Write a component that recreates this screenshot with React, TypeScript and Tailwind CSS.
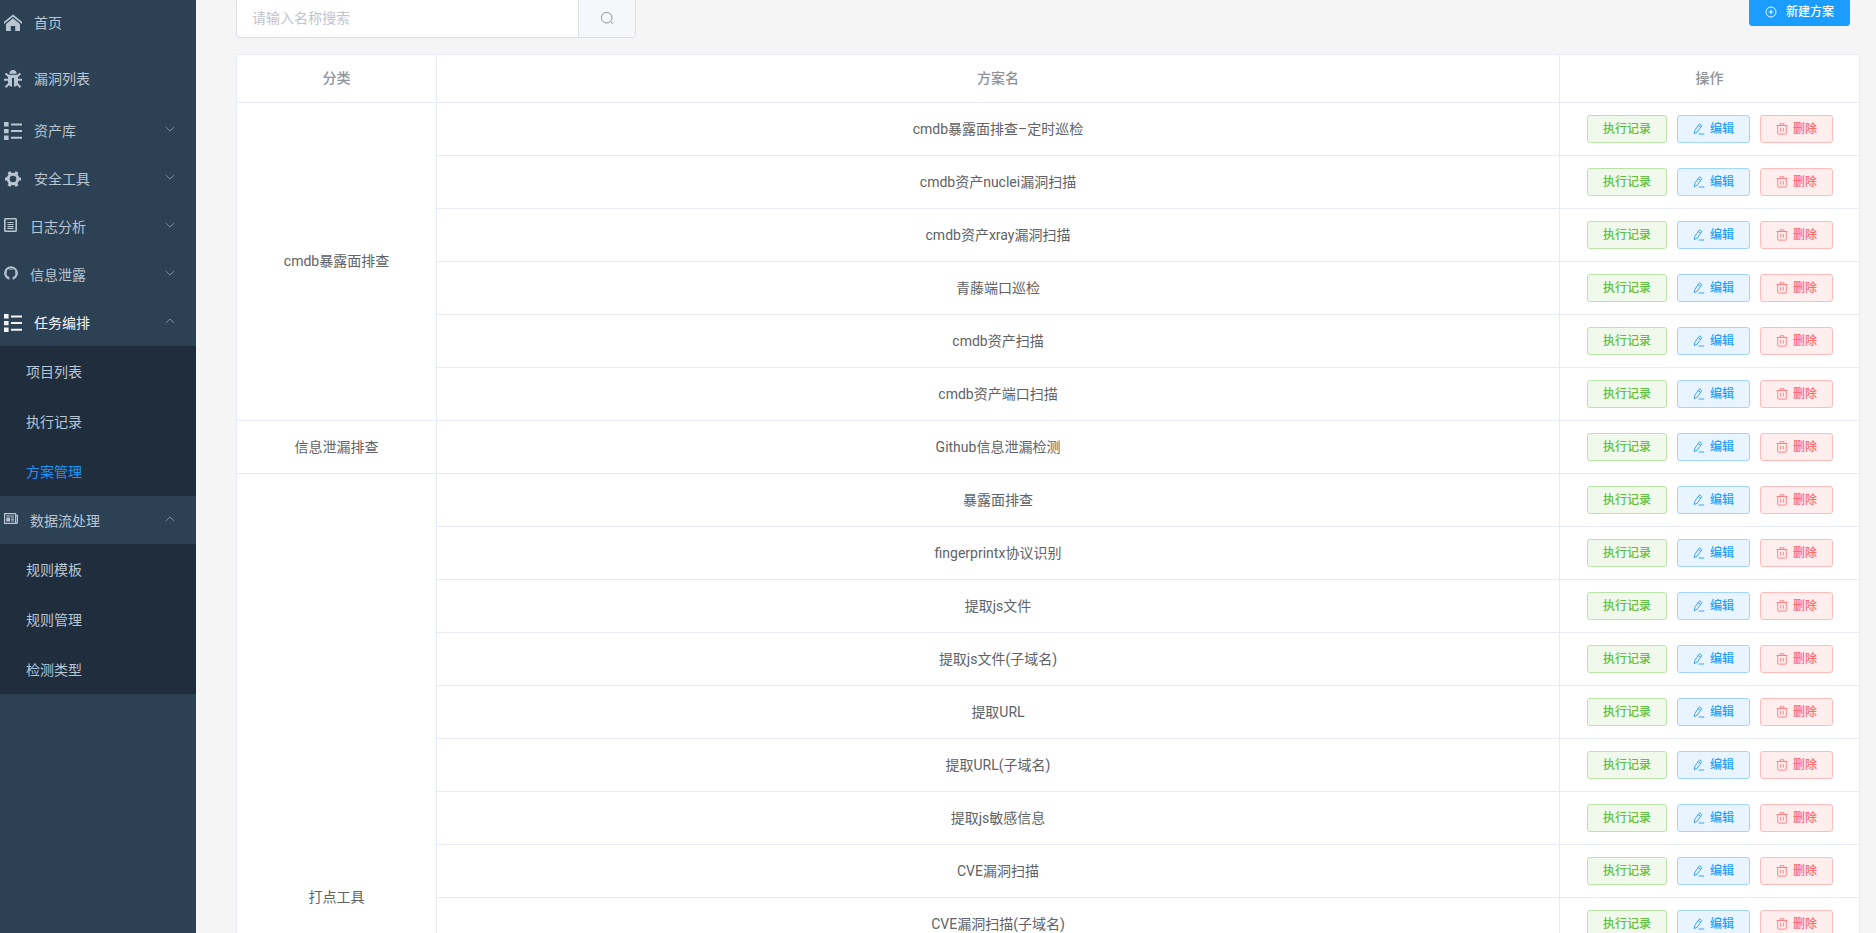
import { useState } from "react";
import type { ReactNode } from "react";
import clsx from "clsx";

type IconProps = { className?: string };

const HomeIcon = ({ className }: IconProps) => (
  <svg viewBox="0 0 18 18" className={className} fill="currentColor" aria-hidden="true">
    <path d="M9 0.6 0 7.8v2.1l9-7.1 9 7.1V7.8z" />
    <path d="M9 4.3 2 9.9V17h4.8v-4.9h4.4V17H16V9.9z" />
  </svg>
);

const BugIcon = ({ className }: IconProps) => (
  <svg viewBox="0 0 18 18" className={className} aria-hidden="true">
    <path d="M5.4 3.7a3.6 3.6 0 0 1 7.2 0z" fill="currentColor" />
    <path
      d="M4 4.7h10v7.6c0 2.6-1.7 4.2-4 4.6V8H8v8.9c-2.3-.4-4-2-4-4.6z"
      fill="currentColor"
    />
    <path
      d="M1.6 3.4 5 6.6M16.4 3.4 13 6.6M0 9.8h4.6M18 9.8h-4.6M1.6 17.2 5 13.6M16.4 17.2 13 13.6"
      stroke="currentColor"
      strokeWidth="2"
    />
  </svg>
);

const ListIcon = ({ className }: IconProps) => (
  <svg viewBox="0 0 18 18" className={className} fill="currentColor" aria-hidden="true">
    <path d="M0 0h4.6v4.4H0zM0 6.9h4.6v4.3H0zM0 13.6h4.6V18H0zM7 1.4h11v2H7zM7 8h11v2H7zM7 14.8h11v2H7z" />
  </svg>
);

const GearIcon = ({ className }: IconProps) => (
  <svg viewBox="0 0 18 18" className={className} aria-hidden="true">
    <circle cx="9" cy="9" r="4.8" fill="none" stroke="currentColor" strokeWidth="3" />
    <path
      d="M6.4 4.5 4.9 1.9M11.6 4.5l1.5-2.6M3.8 9H1M14.2 9H17M6.4 13.5l-1.5 2.6M11.6 13.5l1.5 2.6"
      stroke="currentColor"
      strokeWidth="3.2"
    />
  </svg>
);

const LogIcon = ({ className }: IconProps) => (
  <svg viewBox="0 0 14 14" className={className} fill="none" stroke="currentColor" aria-hidden="true">
    <rect x="0.8" y="0.8" width="11.4" height="12.4" rx="0.8" strokeWidth="1.6" />
    <path d="M3.4 4.5h6.2M3.4 6.5h6.2M3.4 8.5h6.2M3.4 10.4h6.2" strokeWidth="1.1" />
  </svg>
);

const GithubIcon = ({ className }: IconProps) => (
  <svg viewBox="0 0 14 14" className={className} fill="none" stroke="currentColor" aria-hidden="true">
    <path d="M4.9 12.7a6 6 0 1 1 4.2 0" strokeWidth="1.7" />
    <path
      d="M4.9 13.4v-2.2C2.9 10.7 2.2 9.4 2.2 7.5c0-2.8.8-4.3 1.4-5.2l2 .9c1-.2 1.8-.2 2.8 0l2-.9c.6.9 1.4 2.4 1.4 5.2 0 1.900-.7 3.200-2.700 3.700v2.200"
      strokeWidth="1"
    />
    <path d="M2.6 10c.7.3.8 1.6 2.3 1.5" strokeWidth="0.9" />
  </svg>
);

const NewsIcon = ({ className }: IconProps) => (
  <svg viewBox="0 0 14 14" className={className} aria-hidden="true">
    <path d="M.6 1.6h11v9.8H.6zM11.6 3.4h1.8v7.4l-.7.6h-1.1" fill="none" stroke="currentColor" strokeWidth="1.2" />
    <path d="M2.3 3.4h7.6v1H2.3zM2.3 5.4h3.8v4.2H2.3zM7 5.4h3v1H7zM7 7h3v.8H7zM7 8.6h3v.8H7z" fill="currentColor" />
  </svg>
);

const ChevronIcon = ({ className }: IconProps) => (
  <svg viewBox="0 0 12 12" className={className} fill="none" stroke="currentColor" aria-hidden="true">
    <path d="M1.8 4 6 8l4.2-4" />
  </svg>
);

const SearchIcon = ({ className }: IconProps) => (
  <svg viewBox="0 0 14 14" className={className} fill="none" stroke="currentColor" aria-hidden="true">
    <circle cx="6.7" cy="6.7" r="5.3" />
    <path d="m10.5 10.5 2.3 2.3" />
  </svg>
);

const PlusIcon = ({ className }: IconProps) => (
  <svg viewBox="0 0 12 12" className={className} fill="none" stroke="currentColor" aria-hidden="true">
    <circle cx="6" cy="6" r="5" strokeWidth="0.9" />
    <path d="M6 3.7v4.6M3.7 6h4.6" strokeWidth="0.9" />
  </svg>
);

const EditIcon = ({ className }: IconProps) => (
  <svg viewBox="0 0 12 12" className={className} fill="none" stroke="currentColor" aria-hidden="true">
    <path
      d="M1.3 10.6 1.7 7.6 6 1.3a.7.7 0 0 1 1-.2l1.3.9a.7.7 0 0 1 .2 1L4.2 9.2zM5.2 2.6l2.3 1.6M5.6 11h5.6"
      strokeWidth="0.9"
      strokeLinejoin="round"
    />
  </svg>
);

const TrashIcon = ({ className }: IconProps) => (
  <svg viewBox="0 0 12 12" className={className} fill="none" stroke="currentColor" aria-hidden="true">
    <path
      d="M.6 2.5h10.800M4 2.500V.8h4v1.700M1.700 2.500v7.800c0 .5.300.8.800.8h7c.5 0 .8-.3.800-.8V2.500M4.700 4.800v3.800M7.300 4.800v3.800"
      strokeWidth="0.8"
    />
  </svg>
);

type MenuEntry = {
  label: string;
  icon: (props: IconProps) => ReactNode;
  small?: boolean; // font icons are smaller than the svg ones
  link?: boolean;
  active?: boolean;
  children?: string[];
};

const MENU: MenuEntry[] = [
  { label: "首页", icon: HomeIcon, link: true },
  { label: "漏洞列表", icon: BugIcon, link: true },
  { label: "资产库", icon: ListIcon },
  { label: "安全工具", icon: GearIcon },
  { label: "日志分析", icon: LogIcon, small: true },
  { label: "信息泄露", icon: GithubIcon, small: true },
  { label: "任务编排", icon: ListIcon, active: true, children: ["项目列表", "执行记录", "方案管理"] },
  { label: "数据流处理", icon: NewsIcon, small: true, children: ["规则模板", "规则管理", "检测类型"] },
];

const GROUPS = [
  {
    category: "cmdb暴露面排查",
    total: 6,
    plans: [
      "cmdb暴露面排查–定时巡检",
      "cmdb资产nuclei漏洞扫描",
      "cmdb资产xray漏洞扫描",
      "青藤端口巡检",
      "cmdb资产扫描",
      "cmdb资产端口扫描",
    ],
  },
  { category: "信息泄漏排查", total: 1, plans: ["Github信息泄漏检测"] },
  {
    category: "打点工具",
    total: 16,
    plans: [
      "暴露面排查",
      "fingerprintx协议识别",
      "提取js文件",
      "提取js文件(子域名)",
      "提取URL",
      "提取URL(子域名)",
      "提取js敏感信息",
      "CVE漏洞扫描",
      "CVE漏洞扫描(子域名)",
    ],
  },
];

const Sidebar = () => {
  const [open, setOpen] = useState(["任务编排", "数据流处理"]);
  const [current, setCurrent] = useState("方案管理");

  const toggle = (label: string) =>
    setOpen((prev) => (prev.includes(label) ? prev.filter((l) => l !== label) : [...prev, label]));

  return (
    <aside className="w-49 shrink-0 overflow-hidden bg-[#2d4155] text-[#b8c5d3]">
      <nav className="-mt-1.5">
        {MENU.map(({ label, icon: Icon, small, link, active, children }) => {
          const isOpen = open.includes(label);
          const content = (
            <>
              <Icon className={small ? "mb-1 size-3.5" : "size-4.5"} />
              <span>{label}</span>
            </>
          );

          if (link) {
            return (
              <a key={label} href="#" className="flex h-14 items-center gap-3 px-1 pt-0.5">
                {content}
              </a>
            );
          }

          return (
            <div key={label}>
              <button
                type="button"
                onClick={() => toggle(label)}
                aria-expanded={isOpen}
                className={clsx(
                  "flex h-12 w-full items-center gap-3 pt-0.5 pr-5 pl-1",
                  active && "text-[#f4f4f5]",
                )}
              >
                {content}
                <ChevronIcon
                  className={clsx("mb-1 ml-auto size-3 text-[#84909d]", isOpen && "rotate-180")}
                />
              </button>
              {isOpen && children && (
                <div className="bg-[#1f2d3d]">
                  {children.map((child) => (
                    <a
                      key={child}
                      href="#"
                      onClick={() => setCurrent(child)}
                      className={clsx(
                        "flex h-12.5 items-center pt-0.5 pl-6.5",
                        child === current && "text-[#1c98f8]",
                      )}
                    >
                      {child}
                    </a>
                  ))}
                </div>
              )}
            </div>
          );
        })}
      </nav>
    </aside>
  );
};

const miniButton =
  "flex h-7 items-center rounded-[3px] border px-[15px] text-xs font-medium whitespace-nowrap";

const RowActions = () => (
  <div className="flex justify-center gap-2.5 pl-px">
    <button type="button" className={`${miniButton} border-[#b9e5a6] bg-[#f0f9eb] text-[#5fc044]`}>
      执行记录
    </button>
    <button type="button" className={`${miniButton} gap-[5px] border-[#a3d3ff] bg-[#e8f4ff] text-[#259dff]`}>
      <EditIcon className="size-3" />
      编辑
    </button>
    <button type="button" className={`${miniButton} gap-[5px] border-[#ffbcbc] bg-[#ffeeee] text-[#ff6a6e]`}>
      <TrashIcon className="size-3" />
      删除
    </button>
  </div>
);

const cell = "border border-[#e6ebf5] text-center";

const PlanTable = () => (
  <table className="mt-4 w-full table-fixed border-collapse bg-white text-[#606266]">
    <thead>
      <tr className="h-12 text-[#909399]">
        <th className={`${cell} w-50 pb-0.5 font-medium`}>分类</th>
        <th className={`${cell} pb-0.5 font-medium`}>方案名</th>
        <th className={`${cell} w-75 pb-0.5 font-medium`}>操作</th>
      </tr>
    </thead>
    <tbody>
      {GROUPS.map(({ category, total, plans }) =>
        Array.from({ length: total }, (_, i) => (
          <tr key={`${category}-${i}`} className="h-[53px]">
            {i === 0 && (
              <td rowSpan={total} className={`${cell} pb-px`}>
                {category}
              </td>
            )}
            <td className={cell}>{plans[i]}</td>
            <td className={cell}>{plans[i] && <RowActions />}</td>
          </tr>
        )),
      )}
    </tbody>
  </table>
);

const App = () => {
  const [keyword, setKeyword] = useState("");

  return (
    <div className="flex h-screen overflow-hidden bg-[#f5f5f5] font-[Roboto,'Noto_Sans_CJK_SC',sans-serif] text-sm">
      <Sidebar />
      <main className="min-w-0 flex-1 overflow-hidden pr-4 pl-10">
        <div className="-mt-0.5 flex items-start justify-between">
          <form
            className="flex h-10 w-100 overflow-hidden rounded border border-[#dcdfe6] bg-white"
            onSubmit={(e) => e.preventDefault()}
          >
            <input
              type="text"
              aria-label="请输入名称搜索"
              placeholder="请输入名称搜索"
              value={keyword}
              onChange={(e) => setKeyword(e.target.value)}
              className="min-w-0 flex-1 px-[15px] text-[#606266] outline-none placeholder:text-[#c0c4cc]"
            />
            <button
              type="submit"
              aria-label="搜索"
              className="flex w-[57px] items-center justify-center border-l border-[#dcdfe6] bg-[#f5f7fa] text-[#909399]"
            >
              <SearchIcon className="size-3.5" />
            </button>
          </form>
          <button
            type="button"
            className={`${miniButton} mr-2.5 gap-[9px] border-[#1a9dff] bg-[#1a9dff] text-white`}
          >
            <PlusIcon className="size-3" />
            新建方案
          </button>
        </div>
        <PlanTable />
      </main>
    </div>
  );
};

export default App;
